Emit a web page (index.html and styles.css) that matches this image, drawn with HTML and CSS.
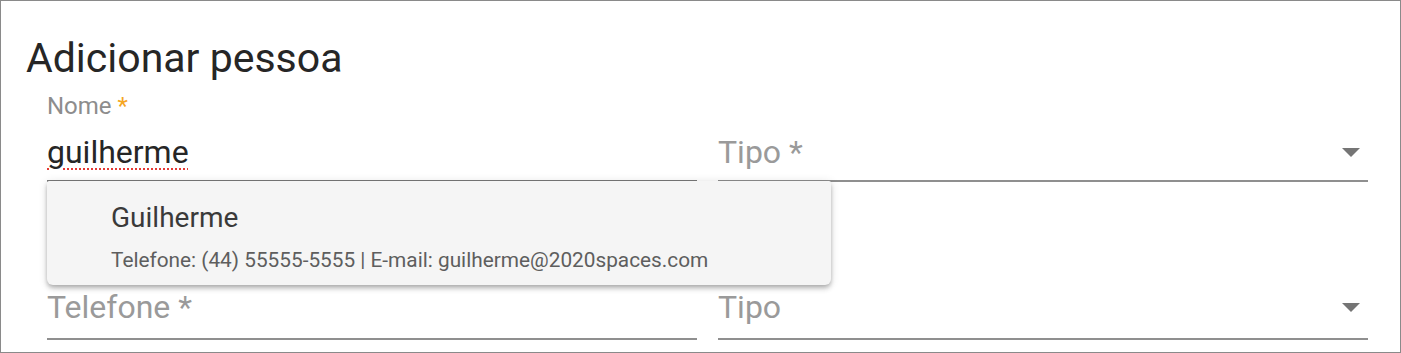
FILE: index.html
```html
<!DOCTYPE html>
<html lang="pt">
<head>
<meta charset="utf-8">
<title>Adicionar pessoa</title>
<link rel="stylesheet" href="styles.css">
</head>
<body>
<div class="frame">
  <h1 class="title">Adicionar pessoa</h1>
  <div class="form">
    <div class="row">
      <div class="field field-open">
        <div class="label">Nome <span class="req">*</span></div>
        <div class="control"><span class="value">guilherme</span></div>
        <div class="panel">
          <div class="opt-name">Guilherme</div>
          <div class="opt-info">Telefone: (44) 55555-5555 | E-mail: guilherme@2020spaces.com</div>
        </div>
      </div>
      <div class="field">
        <div class="label"></div>
        <div class="control"><span class="placeholder">Tipo *</span><span class="arrow"></span></div>
      </div>
    </div>
    <div class="row row-second">
      <div class="field field-low">
        <div class="label"></div>
        <div class="control"><span class="placeholder">Telefone *</span></div>
      </div>
      <div class="field field-low">
        <div class="label"></div>
        <div class="control"><span class="placeholder">Tipo</span><span class="arrow"></span></div>
      </div>
    </div>
  </div>
</div>
</body>
</html>
```

FILE: styles.css
```css
html, body {
  margin: 0;
  padding: 0;
  background: #ffffff;
}

body {
  font-family: Roboto, "Noto Sans", "Liberation Sans", sans-serif;
}

.frame {
  box-sizing: border-box;
  width: 1401px;
  height: 353px;
  border: 1px solid #8a8a8a;
  padding: 33px 32px 0 25px;
  overflow: hidden;
}

.title {
  margin: 0;
  font-size: 41px;
  line-height: 48px;
  font-weight: 400;
  color: #262626;
}

.form {
  margin: 7px 0 0 21px;
}

.row {
  display: grid;
  grid-template-columns: 1fr 1fr;
  column-gap: 21px;
}

.row-second {
  margin-top: 62px;
}

.field {
  position: relative;
  display: flex;
  flex-direction: column;
  border-bottom: 2px solid #8f8f8f;
}

.field-open {
  border-bottom-color: #7a7a7a;
}

.label {
  height: 28px;
  padding-top: 3px;
  margin-bottom: 12px;
  font-size: 24px;
  line-height: 28px;
  color: #8d8d8d;
}

.req {
  color: #f5a623;
}

.control {
  display: flex;
  align-items: center;
  justify-content: space-between;
  height: 40px;
  padding-bottom: 8px;
  font-size: 32px;
  line-height: 40px;
}

.field-low .control {
  padding-bottom: 11px;
}

.value {
  color: #262626;
  text-decoration-line: underline;
  text-decoration-style: dotted;
  text-decoration-color: #e53935;
  text-decoration-thickness: 2px;
  text-underline-offset: 5px;
}

.placeholder {
  color: #9a9a9a;
}

.arrow {
  width: 0;
  height: 0;
  margin-right: 8px;
  border-left: 9px solid transparent;
  border-right: 9px solid transparent;
  border-top: 9px solid #757575;
}

.panel {
  position: absolute;
  top: calc(100% + 1px);
  left: 0;
  z-index: 2;
  box-sizing: border-box;
  width: 784px;
  padding: 21px 0 13px 64px;
  background: #f5f5f5;
  border-radius: 2px 2px 6px 6px;
  box-shadow: 0 2px 4px -1px rgba(0, 0, 0, 0.2), 0 4px 5px 0 rgba(0, 0, 0, 0.14), 0 1px 10px 0 rgba(0, 0, 0, 0.12);
}

.opt-name {
  font-size: 28px;
  line-height: 32px;
  color: #3a3a3a;
}

.opt-info {
  margin-top: 14px;
  font-size: 20.8px;
  line-height: 24px;
  color: #5e5e5e;
  white-space: nowrap;
}
```
